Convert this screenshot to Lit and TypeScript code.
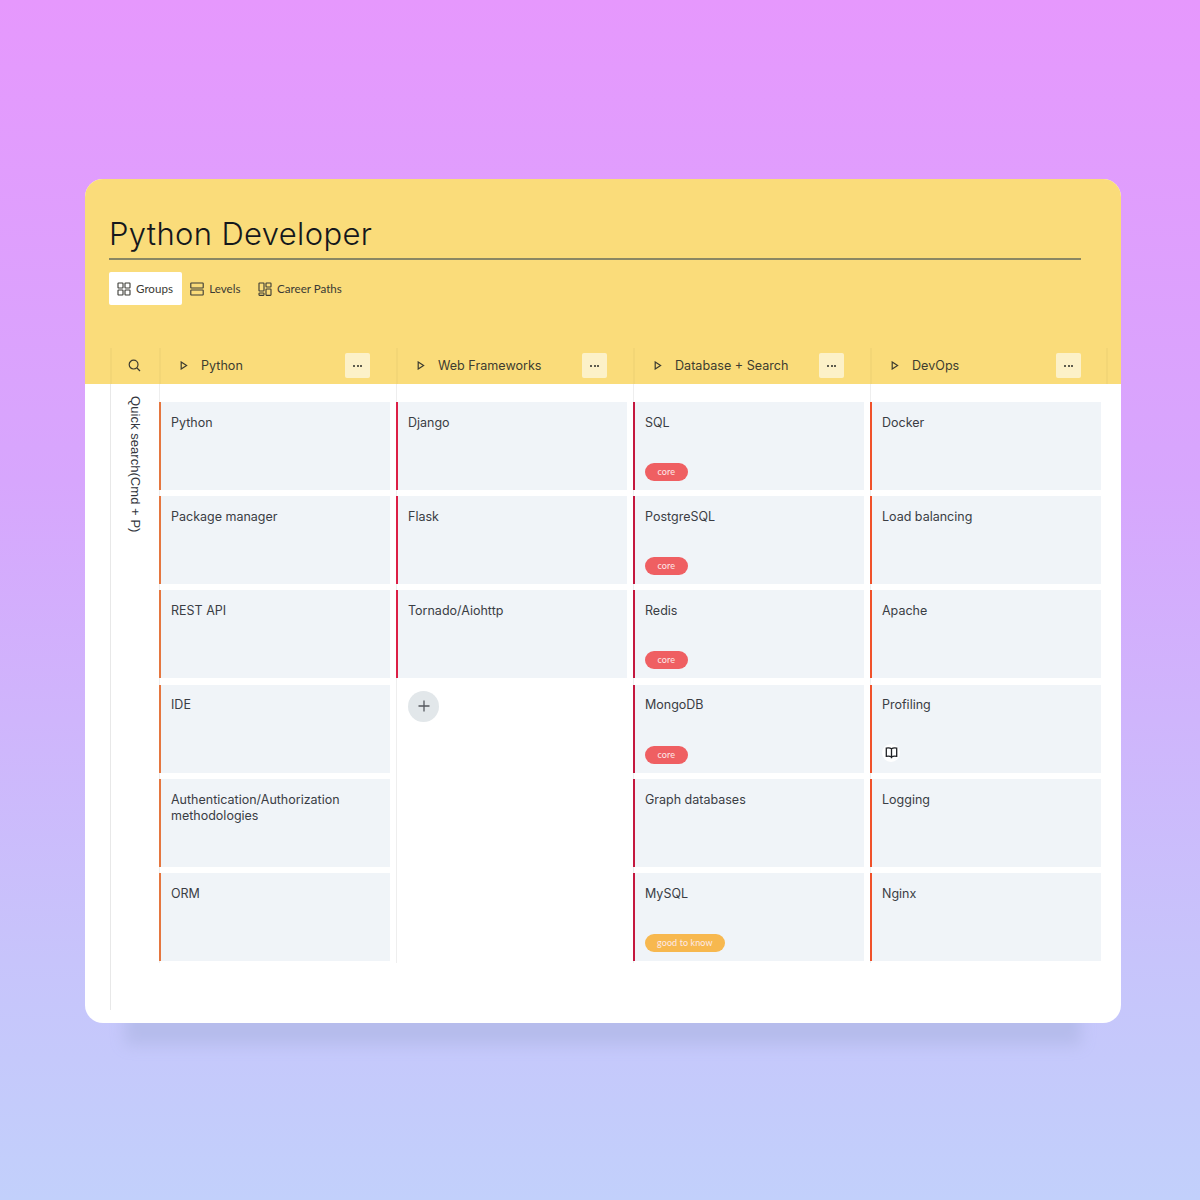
import { LitElement, css, html, nothing } from 'lit'
import { customElement } from 'lit/decorators.js'

type Item = { name: string; tag?: 'core' | 'good to know'; book?: boolean }
type Column = { title: string; accent: string; items: Item[]; add?: boolean }

const columns: Column[] = [
  {
    title: 'Python',
    accent: '#e5763f',
    items: [
      { name: 'Python' },
      { name: 'Package manager' },
      { name: 'REST API' },
      { name: 'IDE' },
      { name: 'Authentication/Authorization methodologies' },
      { name: 'ORM' },
    ],
  },
  {
    title: 'Web Frameworks',
    accent: '#dc1f45',
    add: true,
    items: [{ name: 'Django' }, { name: 'Flask' }, { name: 'Tornado/Aiohttp' }],
  },
  {
    title: 'Database + Search',
    accent: '#c4183f',
    items: [
      { name: 'SQL', tag: 'core' },
      { name: 'PostgreSQL', tag: 'core' },
      { name: 'Redis', tag: 'core' },
      { name: 'MongoDB', tag: 'core' },
      { name: 'Graph databases' },
      { name: 'MySQL', tag: 'good to know' },
    ],
  },
  {
    title: 'DevOps',
    accent: '#f0512a',
    items: [
      { name: 'Docker' },
      { name: 'Load balancing' },
      { name: 'Apache' },
      { name: 'Profiling', book: true },
      { name: 'Logging' },
      { name: 'Nginx' },
    ],
  },
]

@customElement('app-root')
export class AppRoot extends LitElement {
  static styles = css`
    :host {
      display: block;
      height: 1200px;
      padding: 179px 79px 0 85px;
      box-sizing: border-box;
      background: linear-gradient(180deg, #e698fd 0%, #d7a6fd 40%, #c7c4fb 80%, #c2d0fb 100%);
      font-family: Inter, sans-serif;
      color: #3a3d44;
    }
    .card {
      height: 844px;
      border-radius: 18px;
      background: #fff;
      box-shadow: 0 62px 14px -40px #b6bcec;
    }
    .top {
      height: 205px;
      padding: 0 40px 0 24px;
      background: #fadc7a;
      box-sizing: border-box;
      border-radius: 18px 18px 0 0;
      display: flex;
      flex-direction: column;
    }
    h1 {
      margin: 0;
      padding-top: 33px;
      height: 81px;
      flex: none;
      box-sizing: border-box;
      border-bottom: 2px solid #8a8763;
      font-weight: 300;
      font-size: 31px;
      line-height: 44px;
      letter-spacing: 0.35px;
      color: #14171c;
    }
    .tabs {
      display: flex;
      margin-top: 12px;
    }
    .tab {
      display: flex;
      align-items: center;
      gap: 5px;
      height: 33px;
      padding: 0 9.6px 0 8px;
      font-family: Lato, sans-serif;
      font-size: 11.6px;
      color: #3a3a34;
      border-radius: 2px;
    }
    .tab.on {
      background: #fff;
      padding-right: 9.3px;
    }
    .tab svg {
      width: 14px;
      height: 14px;
      display: block;
    }
    .heads,
    .board {
      display: grid;
      grid-template-columns: 49px repeat(4, 237px);
    }
    .heads {
      margin: auto 0 0 1px;
    }
    .board {
      margin-left: 25px;
    }
    .head {
      height: 36px;
      padding-bottom: 1px;
      border-left: 2px solid #f3d676;
      box-sizing: border-box;
      display: flex;
      align-items: center;
      font-size: 12.6px;
      color: #3d3c30;
    }
    .head.rail {
      justify-content: center;
    }
    .head.end {
      border-right: 2px solid #f3d676;
      margin-right: -1px;
    }
    .head svg.search {
      width: 13px;
      height: 13px;
      margin-right: 3px;
    }
    .head .tri {
      width: 8px;
      height: 9px;
      margin-left: 19px;
      margin-right: 13px;
      flex: none;
    }
    .head .more {
      margin-left: auto;
      margin-right: 26px;
      width: 25px;
      height: 25px;
      background: #fcf1c8;
      border-radius: 2px;
      display: flex;
      align-items: center;
      justify-content: center;
      gap: 1.5px;
    }
    .head.end .more {
      margin-right: 25px;
    }
    .more i {
      width: 2px;
      height: 2px;
      border-radius: 50%;
      background: #2a2a26;
    }
    .side {
      height: 626px;
      border-left: 1px solid #e8e8e8;
      padding-top: 12px;
      box-sizing: border-box;
      display: flex;
      justify-content: center;
    }
    .side span {
      writing-mode: vertical-rl;
      font-family: 'Liberation Sans', sans-serif;
      font-size: 13px;
      letter-spacing: 0.05px;
      color: #33363d;
    }
    .col {
      height: 579px;
      border-left: 1px solid #eeeeee;
      padding: 18px 6px 0 0;
      box-sizing: border-box;
      display: flex;
      flex-direction: column;
      gap: 6.2px;
    }
    .item {
      height: 88px;
      flex: none;
      box-sizing: border-box;
      margin-left: -1px;
      padding: 12.8px 10px 0 10px;
      background: #f0f4f8;
      border-left: 2px solid;
      font-size: 12.5px;
      line-height: 16px;
      position: relative;
    }
    .tag {
      position: absolute;
      left: 10px;
      bottom: 9px;
      height: 18px;
      border-radius: 9px;
      font-family: Lato, sans-serif;
      font-size: 9px;
      line-height: 18px;
      letter-spacing: 0.1px;
      color: #fdeaea;
    }
    .tag.core {
      padding: 0 12.5px;
      background: #ef5f62;
    }
    .tag.good {
      padding: 0 12px;
      background: #f7b84f;
    }
    .book {
      position: absolute;
      left: 10px;
      bottom: 11px;
      width: 18px;
      height: 18px;
      border-radius: 50%;
      background: #fff;
      display: flex;
      align-items: center;
      justify-content: center;
    }
    .book svg {
      width: 13px;
      height: 13px;
    }
    .add {
      margin: 6px 0 0 11px;
      width: 31px;
      height: 31px;
      border-radius: 50%;
      background: #e2e7ea;
      display: flex;
      align-items: center;
      justify-content: center;
      color: #55585e;
    }
    .add svg {
      width: 12px;
      height: 12px;
    }
  `

  private tag(item: Item) {
    if (item.book) {
      return html`<span class="book">
        <svg viewBox="0 0 12 12" fill="none" stroke="#202226" stroke-width="1.2">
          <path d="M6 2.6C5 1.8 3 1.6 1.2 1.9v7.6C3 9.2 5 9.4 6 10.2c1-.8 3-1 4.8-.7V1.9C9 1.6 7 1.8 6 2.6zM6 2.6v8.6" />
        </svg>
      </span>`
    }
    if (!item.tag) return nothing
    return html`<span class="tag ${item.tag === 'core' ? 'core' : 'good'}">${item.tag}</span>`
  }

  render() {
    return html`
      <div class="card">
        <div class="top">
          <h1>Python Developer</h1>
          <div class="tabs">
            <div class="tab on">
              <svg viewBox="0 0 14 14" fill="none" stroke="currentColor" stroke-width="1.1">
                <rect x="1" y="1" width="5" height="5" rx=".6" /><rect x="8" y="1" width="5" height="5" rx=".6" />
                <rect x="1" y="8" width="5" height="5" rx=".6" /><rect x="8" y="8" width="5" height="5" rx=".6" />
              </svg>
              Groups
            </div>
            <div class="tab">
              <svg viewBox="0 0 14 14" fill="none" stroke="currentColor" stroke-width="1.1">
                <rect x=".8" y="1" width="12.4" height="5" rx=".6" /><rect x=".8" y="8" width="12.4" height="5" rx=".6" />
              </svg>
              Levels
            </div>
            <div class="tab">
              <svg viewBox="0 0 14 14" fill="none" stroke="currentColor" stroke-width="1.1">
                <rect x="1" y="1" width="5" height="8" rx=".6" /><rect x="8" y="1" width="5" height="4" rx=".6" />
                <rect x="1" y="11" width="5" height="2.4" rx=".6" /><rect x="8" y="7" width="5" height="6.4" rx=".6" />
              </svg>
              Career Paths
            </div>
          </div>
          <div class="heads">
            <div class="head rail">
              <svg class="search" viewBox="0 0 13 13" fill="none" stroke="currentColor" stroke-width="1.2">
                <circle cx="5.6" cy="5.6" r="4.4" /><path d="M9 9l3 3" />
              </svg>
            </div>
            ${columns.map(
              (c, i) => html`<div class="head ${i === columns.length - 1 ? 'end' : ''}">
                <svg class="tri" viewBox="0 0 8 9" fill="none" stroke="currentColor" stroke-width="1.2">
                  <path d="M1.2 1v7l5.4-3.5z" />
                </svg>
                ${c.title}
                <span class="more"><i></i><i></i><i></i></span>
              </div>`,
            )}
          </div>
        </div>
        <div class="board">
          <div class="side"><span>Quick search(Cmd + P)</span></div>
          ${columns.map(
            (c) => html`<div class="col">
              ${c.items.map(
                (it) => html`<div class="item" style="border-left-color:${c.accent}">${it.name}${this.tag(it)}</div>`,
              )}
              ${c.add
                ? html`<div class="add">
                    <svg viewBox="0 0 12 12" fill="none" stroke="currentColor" stroke-width="1.3"><path d="M6 .5v11M.5 6h11" /></svg>
                  </div>`
                : nothing}
            </div>`,
          )}
        </div>
      </div>
    `
  }
}

declare global {
  interface HTMLElementTagNameMap {
    'app-root': AppRoot
  }
}
